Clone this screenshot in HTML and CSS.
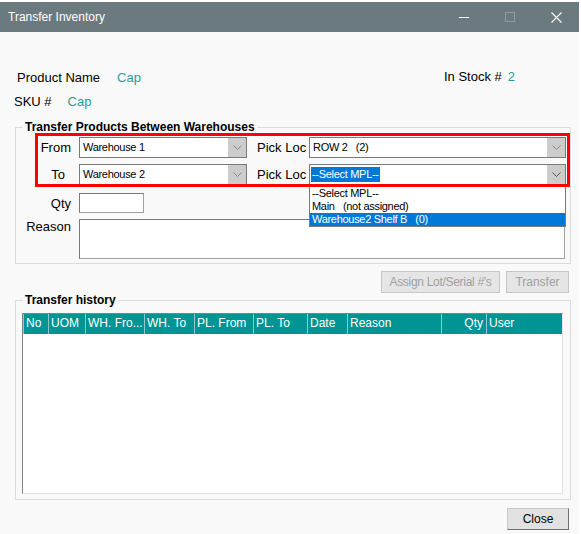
FILE: index.html
```html
<!DOCTYPE html>
<html lang="en">
<head>
    <meta charset="UTF-8">
    <title>Transfer Inventory</title>
    <link rel="stylesheet" href="styles.css">
</head>
<body>
    <div class="screen">
        <div class="window">
            <div class="titlebar">
                <span class="title">Transfer Inventory</span>
                <div class="controls">
                    <span class="ctl"><svg width="10" height="10"><path d="M0 5.5h10" stroke="#fff" stroke-width="1"/></svg></span>
                    <span class="ctl"><svg width="10" height="10"><rect x="0.5" y="0.5" width="9" height="9" fill="none" stroke="#8e9c9f"/></svg></span>
                    <span class="ctl"><svg width="11" height="11"><path d="M0.5 0.5L10.5 10.5M10.5 0.5L0.5 10.5" stroke="#fff" stroke-width="1.1"/></svg></span>
                </div>
            </div>

            <div class="client">
                <div class="info-row">
                    <span><span class="lbl">Product Name</span><span class="val name-val">Cap</span></span>
                    <span class="stock"><span class="lbl">In Stock #</span><span class="val stock-val">2</span></span>
                </div>
                <div class="info-row sku">
                    <span><span class="lbl">SKU #</span><span class="val sku-val">Cap</span></span>
                </div>

                <fieldset class="group">
                    <legend>Transfer Products Between Warehouses</legend>
                    <div class="transfer-body">
                        <div class="row">
                            <label class="side">From</label>
                            <div class="combo wh"><span class="combo-text">Warehouse 1</span><span class="arrow"><svg width="9" height="5"><path d="M0.5 0.5L4.5 4.5L8.5 0.5" fill="none" stroke="#8a8a8a"/></svg></span></div>
                            <label class="pick">Pick Loc</label>
                            <div class="combo loc"><span class="combo-text">ROW 2&nbsp;&nbsp;&nbsp;(2)</span><span class="arrow"><svg width="9" height="5"><path d="M0.5 0.5L4.5 4.5L8.5 0.5" fill="none" stroke="#8a8a8a"/></svg></span></div>
                        </div>
                        <div class="row">
                            <label class="side to">To</label>
                            <div class="combo wh"><span class="combo-text">Warehouse 2</span><span class="arrow"><svg width="9" height="5"><path d="M0.5 0.5L4.5 4.5L8.5 0.5" fill="none" stroke="#8a8a8a"/></svg></span></div>
                            <label class="pick">Pick Loc</label>
                            <div class="combo loc"><span class="combo-text"><span class="selected">--Select MPL--</span></span><span class="arrow"><svg width="9" height="5"><path d="M0.5 0.5L4.5 4.5L8.5 0.5" fill="none" stroke="#555"/></svg></span></div>
                        </div>
                        <div class="row qty-row">
                            <label class="side">Qty</label>
                            <div class="textbox qty"></div>
                        </div>
                        <div class="row reason-row">
                            <label class="side">Reason</label>
                            <div class="textbox reason"></div>
                        </div>

                        <div class="highlight"></div>
                        <ul class="droplist">
                            <li>--Select MPL--</li>
                            <li>Main&nbsp;&nbsp;&nbsp;(not assigned)</li>
                            <li class="active">Warehouse2 Shelf B&nbsp;&nbsp;&nbsp;(0)</li>
                        </ul>
                    </div>
                </fieldset>

                <div class="actions">
                    <button class="btn assign" disabled>Assign Lot/Serial #'s</button>
                    <button class="btn transfer" disabled>Transfer</button>
                </div>

                <fieldset class="group history">
                    <legend>Transfer history</legend>
                    <div class="grid">
                        <div class="grid-head">
                            <span class="c-no">No</span>
                            <span class="c-uom">UOM</span>
                            <span class="c-whf">WH. Fro...</span>
                            <span class="c-wht">WH. To</span>
                            <span class="c-plf">PL. From</span>
                            <span class="c-plt">PL. To</span>
                            <span class="c-date">Date</span>
                            <span class="c-reason">Reason</span>
                            <span class="c-qty">Qty</span>
                            <span class="c-user">User</span>
                        </div>
                    </div>
                </fieldset>

                <div class="footer">
                    <button class="btn close">Close</button>
                </div>
            </div>
        </div>
    </div>
</body>
</html>
```

FILE: styles.css
```css
* {
    box-sizing: border-box;
}
body {
    margin: 0;
    background: #fff;
    font-family: "Liberation Sans", Arial, sans-serif;
    font-size: 13px;
    color: #000;
}
.screen {
    width: 581px;
    height: 534px;
    padding-top: 2px;
    overflow: hidden;
}
.window {
    width: 579px;
    height: 532px;
    background: #f9f9f9;
}
.titlebar {
    height: 30px;
    background: #6b7a7e;
    display: flex;
    align-items: center;
    color: #fff;
}
.title {
    padding-left: 8px;
    font-size: 12px;
}
.controls {
    margin-left: auto;
    display: flex;
}
.ctl {
    width: 46px;
    height: 30px;
    display: flex;
    align-items: center;
    justify-content: center;
}
.client {
    padding-top: 38px;
}
.info-row {
    display: grid;
    grid-template-columns: 427px auto;
    height: 16px;
    line-height: 16px;
    padding-left: 17px;
}
.info-row.sku {
    margin-top: 8px;
    padding-left: 14px;
}
.val {
    color: #1f9c9c;
}
.name-val {
    margin-left: 17px;
}
.sku-val {
    margin-left: 16px;
}
.stock {
    margin-top: -1px;
}
.stock-val {
    margin-left: 6px;
}
.group {
    margin: 10px 0 0 15px;
    width: 556px;
    padding: 0;
    border: 1px solid #dcdcdc;
    min-width: 0;
}
.group legend {
    margin-left: 7px;
    padding: 0 2px;
    font-weight: bold;
    font-size: 12px;
    line-height: 14px;
}
.transfer-body {
    position: relative;
    padding: 3px 0 4px;
}
.row {
    display: flex;
    align-items: center;
    height: 21px;
}
.row + .row {
    margin-top: 6px;
}
.side {
    width: 55px;
    margin-right: 8px;
    text-align: right;
}
.side.to {
    padding-right: 6px;
}
.pick {
    width: 52px;
    margin-left: 10px;
}
.combo {
    display: flex;
    height: 21px;
    border: 1px solid #7a7a7a;
    background: #fff;
    font-size: 11px;
    letter-spacing: -0.3px;
}
.combo.wh {
    width: 168px;
}
.combo.loc {
    width: 257px;
}
.combo-text {
    flex: 1;
    padding-left: 3px;
    line-height: 19px;
    white-space: pre;
}
.selected {
    display: inline-block;
    margin-left: -2px;
    padding: 0 1px;
    line-height: 15px;
    background: #0078d7;
    color: #fff;
}
.arrow {
    width: 18px;
    background: #cccccc;
    display: flex;
    align-items: center;
    justify-content: center;
}
.qty-row {
    height: 20px;
}
.row.qty-row {
    margin-top: 8px;
}
.textbox {
    background: #fff;
    border: 1px solid #a0a0a0;
    border-top-color: #7a7a7a;
    border-left-color: #7a7a7a;
}
.qty {
    width: 65px;
    height: 20px;
}
.reason-row {
    height: 40px;
    align-items: flex-start;
}
.reason-row .side {
    line-height: 16px;
}
.reason {
    width: 486px;
    height: 40px;
}
.highlight {
    position: absolute;
    left: 19px;
    top: -1px;
    width: 535px;
    height: 54px;
    border: 3px solid #f00;
}
.droplist {
    position: absolute;
    left: 293px;
    top: 53px;
    width: 257px;
    height: 40px;
    margin: 0;
    padding: 0;
    list-style: none;
    background: #fff;
    border: 1px solid #7a7a7a;
    border-top: none;
    font-size: 11px;
    letter-spacing: -0.3px;
}
.droplist li {
    height: 13px;
    line-height: 13px;
    padding-left: 2px;
}
.droplist li.active {
    background: #0078d7;
    color: #fff;
}
.actions {
    display: flex;
    justify-content: flex-end;
    gap: 6px;
    padding-right: 10px;
    margin-top: 7px;
}
.btn {
    height: 22px;
    padding: 0;
    font-family: "Liberation Sans", Arial, sans-serif;
    font-size: 12px;
    background: #e1e1e1;
    border: 1px solid #adadad;
    color: #000;
}
.btn:disabled {
    color: #a0a0a0;
    background: #e5e5e5;
    border-color: #c6c6c6;
}
.assign {
    width: 119px;
    letter-spacing: -0.3px;
}
.transfer {
    width: 63px;
}
.history {
    margin-top: 0;
    padding-bottom: 5px;
}
.grid {
    width: 541px;
    height: 181px;
    margin: 6px 0 0 6px;
    background: #fff;
    border: 1px solid #e3e3e3;
    border-top-color: #828282;
    border-left-color: #828282;
}
.grid-head {
    display: flex;
    height: 20px;
    background: #009494;
    color: #fff;
    font-size: 12px;
}
.grid-head span {
    border-left: 1px solid #8ccaca;
    padding-left: 2px;
    line-height: 19px;
    white-space: nowrap;
    overflow: hidden;
}
.c-no { width: 25px; }
.c-uom { width: 37px; }
.c-whf { width: 59px; }
.c-wht { width: 50px; }
.c-plf { width: 59px; }
.c-plt { width: 54px; }
.c-date { width: 40px; }
.c-reason { width: 94px; }
.grid-head .c-qty {
    width: 45px;
    text-align: right;
    padding-right: 3px;
}
.c-user { width: 76px; }
.footer {
    display: flex;
    justify-content: flex-end;
    padding-right: 10px;
    margin-top: 8px;
}
.close {
    width: 62px;
    border-color: #c8c8c8 #6e6e6e #6e6e6e #c8c8c8;
}
```
